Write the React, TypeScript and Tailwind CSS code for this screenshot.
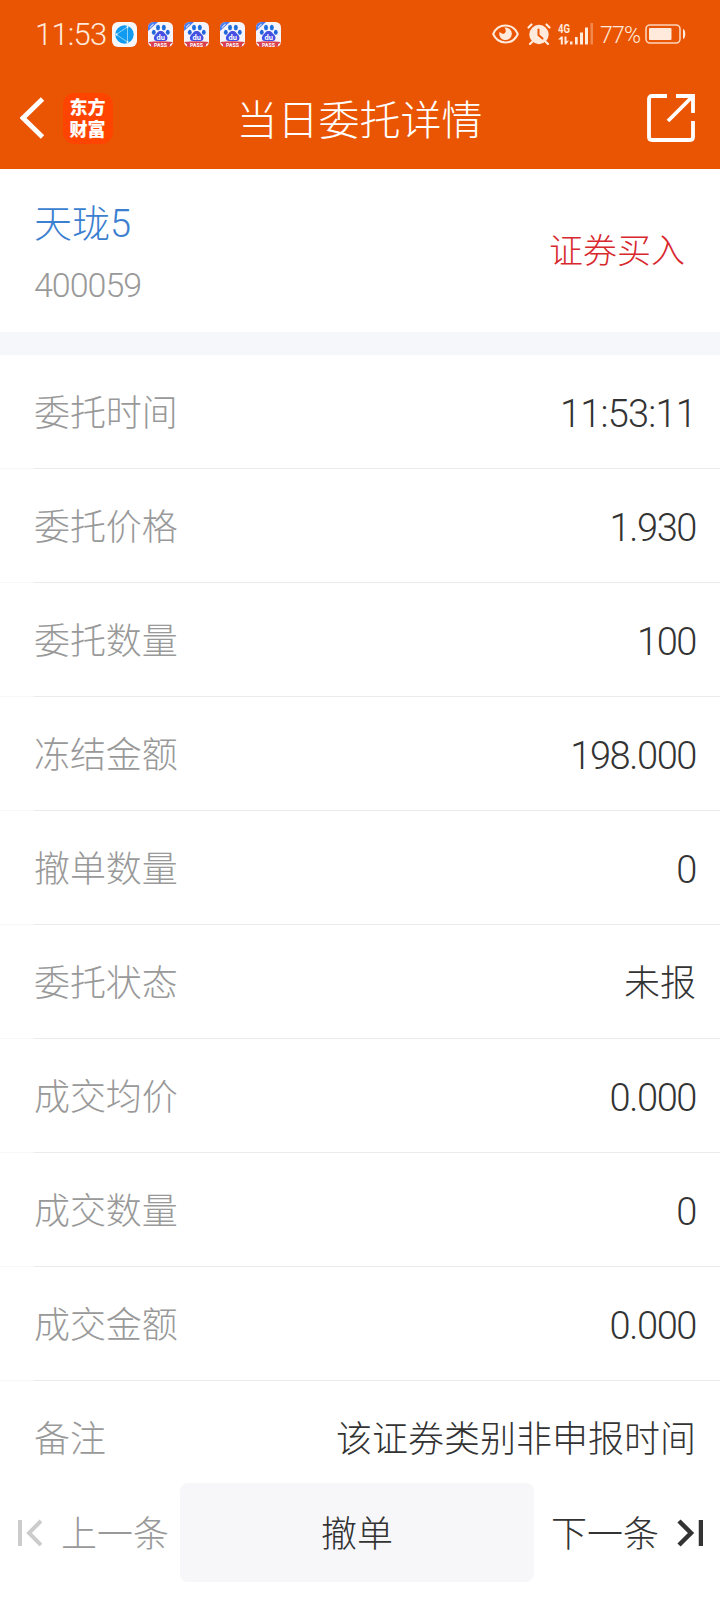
import type { ReactNode } from "react";

interface OrderField {
  label: string;
  value: string;
  kind: "time" | "number" | "text";
}

const orderFields: OrderField[] = [
  { label: "委托时间", value: "11:53:11", kind: "time" },
  { label: "委托价格", value: "1.930", kind: "number" },
  { label: "委托数量", value: "100", kind: "number" },
  { label: "冻结金额", value: "198.000", kind: "number" },
  { label: "撤单数量", value: "0", kind: "number" },
  { label: "委托状态", value: "未报", kind: "text" },
  { label: "成交均价", value: "0.000", kind: "number" },
  { label: "成交数量", value: "0", kind: "number" },
  { label: "成交金额", value: "0.000", kind: "number" },
];

const valueStyles: Record<OrderField["kind"], string> = {
  time: "pt-[3px] font-[Roboto] text-[38px] tracking-[-0.8px]",
  number: "pt-[3px] font-[Roboto] text-[38px] tracking-[-1.4px]",
  text: "pb-[4px]",
};

function BrowserIcon() {
  return (
    <svg viewBox="0 0 25 25" className="h-[25px] w-[25px]">
      <rect width="25" height="25" rx="6" fill="#f7f7fa" />
      <circle cx="12.5" cy="12.5" r="9.2" fill="#119bf0" />
      <path d="M4 12.5 15.5 5M4 12.5l11.500 7.500M15.500 5v15" stroke="#a8e0fb" strokeWidth="0.8" fill="none" />
      <circle cx="4.5" cy="12.5" r="1.1" fill="#eafaff" />
      <circle cx="15.5" cy="5" r="1" fill="#eafaff" />
      <circle cx="15.5" cy="20" r="1" fill="#eafaff" />
    </svg>
  );
}

function BaiduIcon() {
  return (
    <svg viewBox="0 0 25 25" className="h-[25px] w-[25px]">
      <clipPath id="baidu-tile">
        <rect width="25" height="25" rx="5.5" />
      </clipPath>
      <g clipPath="url(#baidu-tile)">
        <rect width="25" height="25" fill="#f5f4fb" />
        <path d="M0 0h10L0 9z" fill="#4a7af0" />
        <path d="M2 5.500 5.500 2" stroke="#bcd0ff" strokeWidth="1.200" />
        <ellipse cx="10" cy="5.500" rx="2" ry="2.700" fill="#1f6fdc" />
        <ellipse cx="15.800" cy="5.500" rx="2" ry="2.700" fill="#1f6fdc" />
        <ellipse cx="5.800" cy="10.300" rx="1.900" ry="2.500" fill="#1f66dc" />
        <ellipse cx="19.800" cy="10.300" rx="1.900" ry="2.500" fill="#1f66dc" />
        <path d="M12.700 9c3 0 3.500 2.200 5.300 3.700 2.600 2.200 1.600 6.300-1.400 6.300H8.800c-3 0-4-4.100-1.400-6.300C9.200 11.200 9.700 9 12.700 9z" fill="#4450e2" />
        <path d="M0 20q12.500-1.500 25 0l-3 2.500V25H3v-2.500z" fill="#d9414f" />
      </g>
      <text x="12.700" y="17.600" textAnchor="middle" fontSize="7.500" fontWeight="700" fill="#fff" fontFamily="Roboto">du</text>
      <text x="12.500" y="24.600" textAnchor="middle" fontSize="5.200" fontWeight="700" fill="#fff" fontFamily="Roboto">PASS</text>
    </svg>
  );
}

function EyeIcon() {
  return (
    <svg viewBox="0 0 27 20" className="h-5 w-[27px]" fill="none">
      <path d="M1.200 10C6-1.200 21-1.200 25.800 10 21 21.200 6 21.200 1.200 10z" stroke="#ffeadb" strokeWidth="2" />
      <path d="M13.500 3.500a6.300 6.300 0 1 1-6 4.600q3.500 3 5.500 1 1.800-2-.5-5.500z" fill="#ffeadb" />
    </svg>
  );
}

function AlarmIcon() {
  return (
    <svg viewBox="0 0 24 22" className="h-[22px] w-6" fill="none" strokeLinecap="round">
      <circle cx="12" cy="11.500" r="9.700" fill="#ffeadb" />
      <path d="M1.500 4.500 4.500 1.500M22.500 4.500 19.500 1.500M5 19l-2 2M19 19l2 2" stroke="#ffeadb" strokeWidth="2.200" />
      <path d="M11.500 6.500v5.500l4 3.500" stroke="#ea5504" strokeWidth="2" />
    </svg>
  );
}

function SignalIcon() {
  return (
    <svg viewBox="0 0 36 24" className="h-6 w-9" fill="#ffeadb">
      <text x="0" y="10.800" fontSize="13" fontWeight="700" fontFamily="Roboto" textLength="12" lengthAdjust="spacingAndGlyphs">4G</text>
      <path d="M0 17.500 3.200 14.500h1.600v8H2.800v-5zM6.500 14.500h2v4.500l2.500-.500-3 4h-1.500z" />
      <rect x="12" y="19.500" width="2.500" height="3" />
      <rect x="17" y="15" width="2.700" height="7.500" />
      <rect x="22" y="10.500" width="3" height="12" />
      <rect x="27" y="5.500" width="3" height="17" />
      <rect x="32.500" y="1" width="2.500" height="21.500" opacity="0.350" />
    </svg>
  );
}

function BatteryIcon() {
  return (
    <svg viewBox="0 0 41 20" className="h-5 w-[41px]">
      <rect x="1" y="1" width="34" height="18" rx="4" fill="none" stroke="#ffeadb" strokeOpacity="0.850" strokeWidth="1.600" />
      <rect x="4" y="4" width="22.500" height="12" rx="1" fill="#ffeadb" />
      <path d="M38 5c3 0 3 10 0 10z" fill="#ffeadb" />
    </svg>
  );
}

function StatusBar() {
  return (
    <div className="flex h-[68px] items-center pl-[35px] pr-[34px] text-[#ffeadb]">
      <span className="w-[77px] whitespace-nowrap font-[Roboto] text-[31px] font-light leading-none tracking-[-0.8px]">
        11:53
      </span>
      <div className="flex gap-[11px]">
        <BrowserIcon />
        <BaiduIcon />
        <BaiduIcon />
        <BaiduIcon />
        <BaiduIcon />
      </div>
      <div className="ml-auto flex items-center">
        <EyeIcon />
        <span className="w-[8px]" />
        <AlarmIcon />
        <span className="w-[7px]" />
        <SignalIcon />
        <span className="ml-[6px] w-[45px] whitespace-nowrap pt-[2px] font-[Roboto] text-[23px] font-light leading-none tracking-[-0.7px]">
          77%
        </span>
        <BatteryIcon />
      </div>
    </div>
  );
}

function TitleBar() {
  return (
    <div className="flex h-[101px] items-center pb-px pl-5 pr-[25px]">
      <svg viewBox="0 0 25 42" className="h-[42px] w-[25px]" fill="none">
        <path d="M22.500 2 3 21l19.500 19" stroke="#fff" strokeWidth="4.800" />
      </svg>
      <div className="ml-[18px] flex h-[51px] w-[50px] items-center justify-center rounded-xl bg-[#ff4400] pb-[3px]">
        <span className="w-[37px] break-all text-[18px] font-black leading-[22px] text-white">东方财富</span>
      </div>
      <h1 className="flex-1 pb-px pl-[9px] text-center text-[41px] font-light leading-none text-white">
        当日委托详情
      </h1>
      <svg viewBox="0 0 48 48" className="ml-[50px] h-12 w-12" fill="none" stroke="#fff" strokeWidth="3.800">
        <path d="M20 2H5Q2 2 2 5v38q0 3 3 3h38q3 0 3-3V27" />
        <path d="M29 2h17v17M46 2 21 27" />
      </svg>
    </div>
  );
}

function FieldRow({ label, children }: { label: string; children: ReactNode }) {
  return (
    <div className="flex h-[114px] items-center justify-between pl-[34px] pr-6 text-[36px] leading-none">
      <span className="pb-[4px] tracking-[-0.1px] text-[#999]">{label}</span>
      {children}
    </div>
  );
}

export default function App() {
  return (
    <div className="flex h-[1600px] w-[720px] flex-col overflow-hidden bg-white font-['Noto_Sans_CJK_SC',sans-serif] font-light text-[#333]">
      <header className="h-[169px] shrink-0 bg-[#ea5504]">
        <StatusBar />
        <TitleBar />
      </header>

      <section className="flex h-[163px] shrink-0 items-center justify-between pl-[34px] pr-[35px]">
        <div className="flex flex-col pt-[3px]">
          <span className="text-[38px] leading-[54px] text-[#3a7fd0]">
            天珑<span className="font-[Roboto]">5</span>
          </span>
          <span className="mt-[8px] font-[Roboto] text-[34px] leading-[52px] tracking-[-1px] text-[#999]">400059</span>
        </div>
        <span className="pb-[3px] text-[34px] leading-none text-[#d8282d]">证券买入</span>
      </section>

      <div className="h-[23px] shrink-0 bg-[#f6f7fa]" />

      {/* Order fields */}
      <main className="shrink-0">
        {orderFields.map((field) => (
          <div key={field.label} className="relative">
            <FieldRow label={field.label}>
              <span className={valueStyles[field.kind]}>{field.value}</span>
            </FieldRow>
            <div className="absolute bottom-0 left-0 flex h-px w-full">
              <span className="w-[34px] bg-[#f7f7f7]" />
              <span className="flex-1 bg-[#ebebeb]" />
            </div>
          </div>
        ))}
      </main>

      {/* Remark, partly tucked under the footer */}
      <div className="h-[102px] shrink-0">
        <FieldRow label="备注">
          <span className="pb-[4px]">该证券类别非申报时间</span>
        </FieldRow>
      </div>

      <footer className="flex h-[117px] shrink-0 items-start text-[36px] leading-none">
        <button className="flex h-[99px] w-[180px] items-center pl-[16px] text-[#999]">
          <svg viewBox="0 0 26 28" className="h-7 w-[26px]" fill="none" stroke="#ccc" strokeWidth="4">
            <path d="M4 1v26M25 2 13 14l12 12" />
          </svg>
          <span className="ml-[19px] whitespace-nowrap pb-[3px]">上一条</span>
        </button>
        <button className="h-[99px] w-[354px] rounded-lg bg-[#f7f7fa] pb-[3px]">撤单</button>
        <button className="flex h-[99px] flex-1 items-center justify-end pr-[17px]">
          <span className="mr-[18px] whitespace-nowrap pb-[3px]">下一条</span>
          <svg viewBox="0 0 26 28" className="h-7 w-[26px]" fill="none" stroke="#333" strokeWidth="4.500">
            <path d="M24 1v26M2 2l12 12L2 26" />
          </svg>
        </button>
      </footer>
    </div>
  );
}
